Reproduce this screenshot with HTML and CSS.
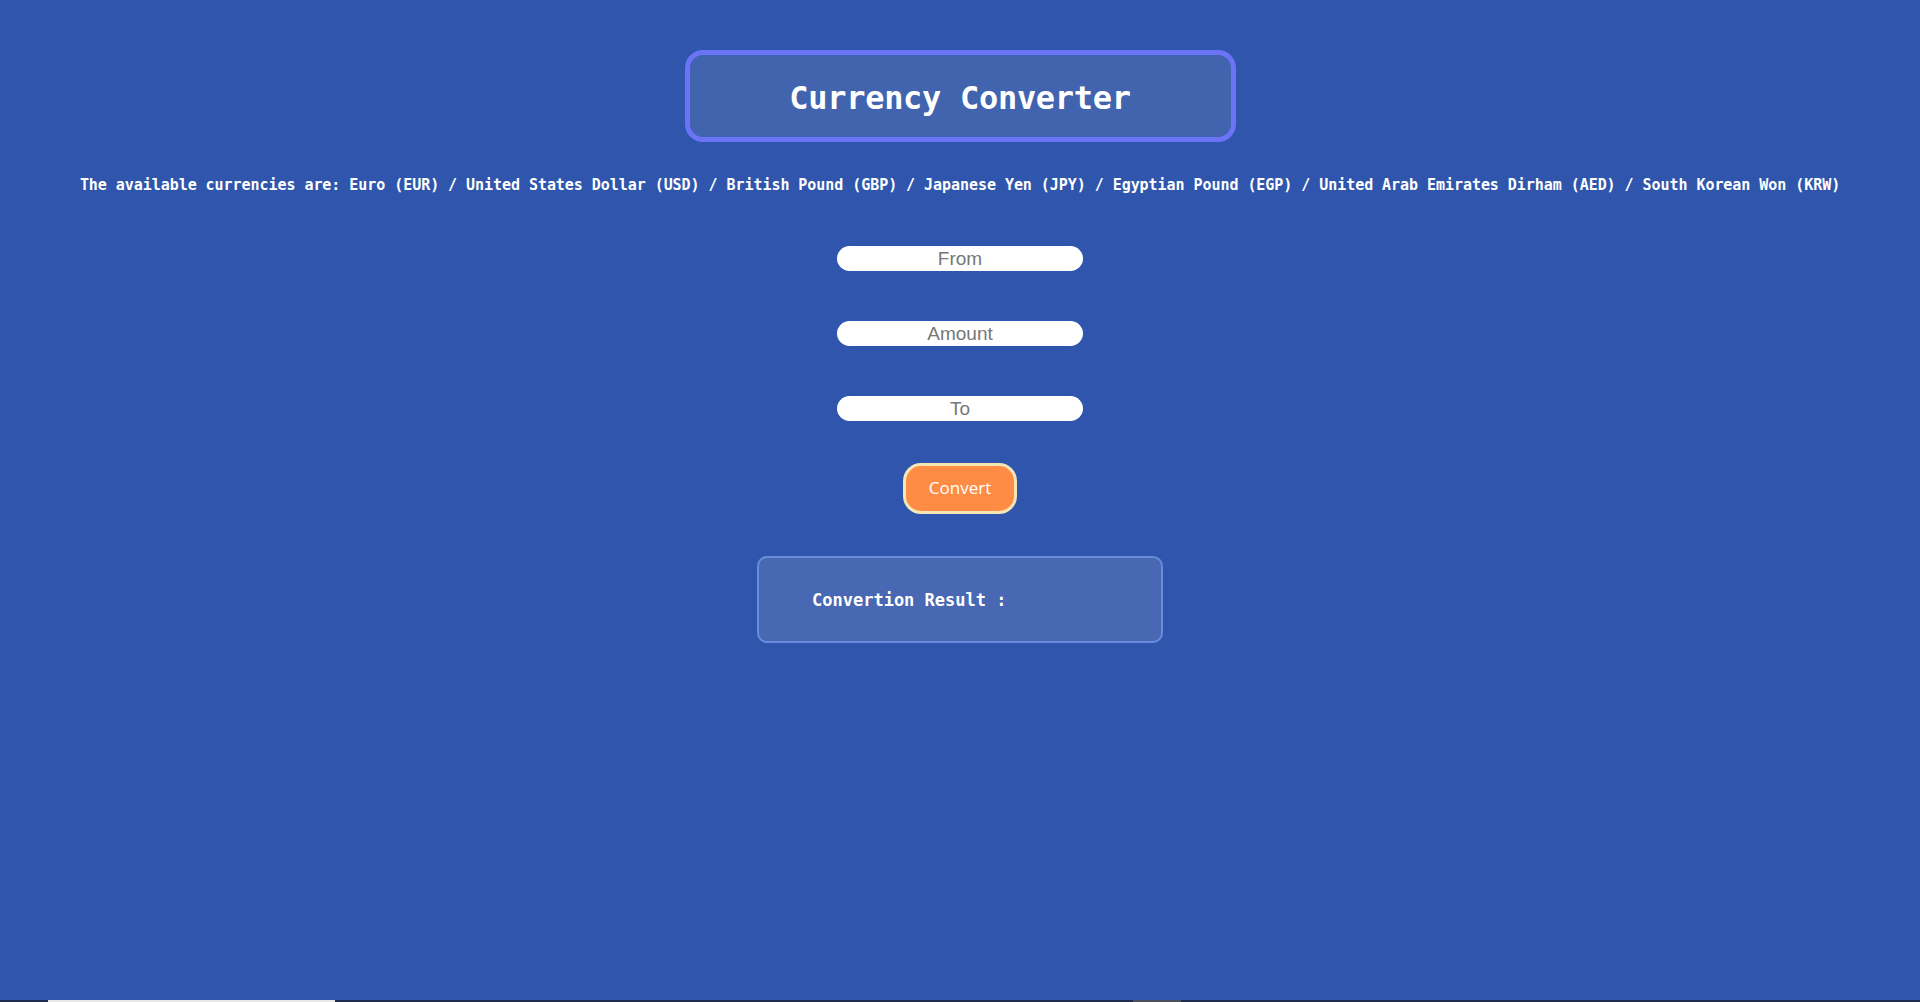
FILE: index.html
```html
<!DOCTYPE html>
<html lang="en">
<head>
<meta charset="utf-8">
<title>Currency Converter</title>
<link rel="stylesheet" href="styles.css">
</head>
<body>
<main class="page">
  <header class="title-box">
    <h1 class="title">Currency Converter</h1>
  </header>
  <p class="currencies">The available currencies are: Euro (EUR) / United States Dollar (USD) / British Pound (GBP) / Japanese Yen (JPY) / Egyptian Pound (EGP) / United Arab Emirates Dirham (AED) / South Korean Won (KRW)</p>
  <form class="form">
    <input class="field" type="text" placeholder="From">
    <input class="field" type="text" placeholder="Amount">
    <input class="field" type="text" placeholder="To">
    <button class="convert" type="button">Convert</button>
  </form>
  <section class="result">
    <span class="result-label">Convertion Result :</span>
  </section>
</main>
<div class="bottom-strip"><span class="strip-a"></span><span class="strip-b"></span></div>
</body>
</html>
```
FILE: styles.css
```css
html, body {
  margin: 0;
  padding: 0;
  height: 100%;
  background: #2f56ac;
  overflow: hidden;
}
.page {
  display: flex;
  flex-direction: column;
  align-items: center;
  padding-top: 50px;
  font-family: "DejaVu Sans Mono", "Liberation Mono", monospace;
  color: #fff;
}
.title-box {
  box-sizing: border-box;
  width: 551px;
  height: 92px;
  border: 5px solid #6b74f6;
  border-radius: 18px;
  background: #4263ad;
  display: flex;
  align-items: center;
  justify-content: center;
  padding-top: 4px;
}
.title {
  margin: 0;
  font-size: 32px;
  font-weight: bold;
  letter-spacing: -0.3px;
}
.currencies {
  margin: 34px 0 0;
  font-size: 15px;
  line-height: 18px;
  font-weight: bold;
  letter-spacing: -0.05px;
  text-align: center;
}
.form {
  display: flex;
  flex-direction: column;
  align-items: center;
  margin-top: 52px;
}
.field {
  box-sizing: border-box;
  width: 246px;
  height: 25px;
  margin: 0 0 50px;
  padding: 0;
  border: none;
  border-radius: 13px;
  background: #fff;
  text-align: center;
  font-family: "Liberation Sans", Arial, sans-serif;
  font-size: 19px;
  color: #333;
  outline: none;
}
.field:last-of-type {
  margin-bottom: 0;
}
.field::placeholder {
  color: #777;
}
.convert {
  box-sizing: border-box;
  margin-top: 42px;
  width: 114px;
  height: 51px;
  border: 3px solid #f2e6b5;
  border-radius: 18px;
  background: #ff8c45;
  color: #fff;
  font-family: "Open Sans", "Liberation Sans", sans-serif;
  font-size: 17px;
  padding: 0 0 2px;
}
.result {
  box-sizing: border-box;
  margin-top: 42px;
  width: 406px;
  height: 87px;
  border: 2px solid #6a8bdb;
  border-radius: 10px;
  background: #4868b3;
  display: flex;
  align-items: center;
  padding-left: 53px;
}
.result-label {
  font-size: 17px;
  font-weight: bold;
}
.bottom-strip {
  position: fixed;
  left: 0;
  right: 0;
  bottom: 0;
  height: 2px;
  background: #1f2c4e;
}
.strip-a {
  position: absolute;
  left: 48px;
  width: 287px;
  top: 0;
  height: 2px;
  background: #e8e8e8;
}
.strip-b {
  position: absolute;
  left: 1133px;
  width: 48px;
  top: 0;
  height: 2px;
  background: #4a4f5c;
}
```
